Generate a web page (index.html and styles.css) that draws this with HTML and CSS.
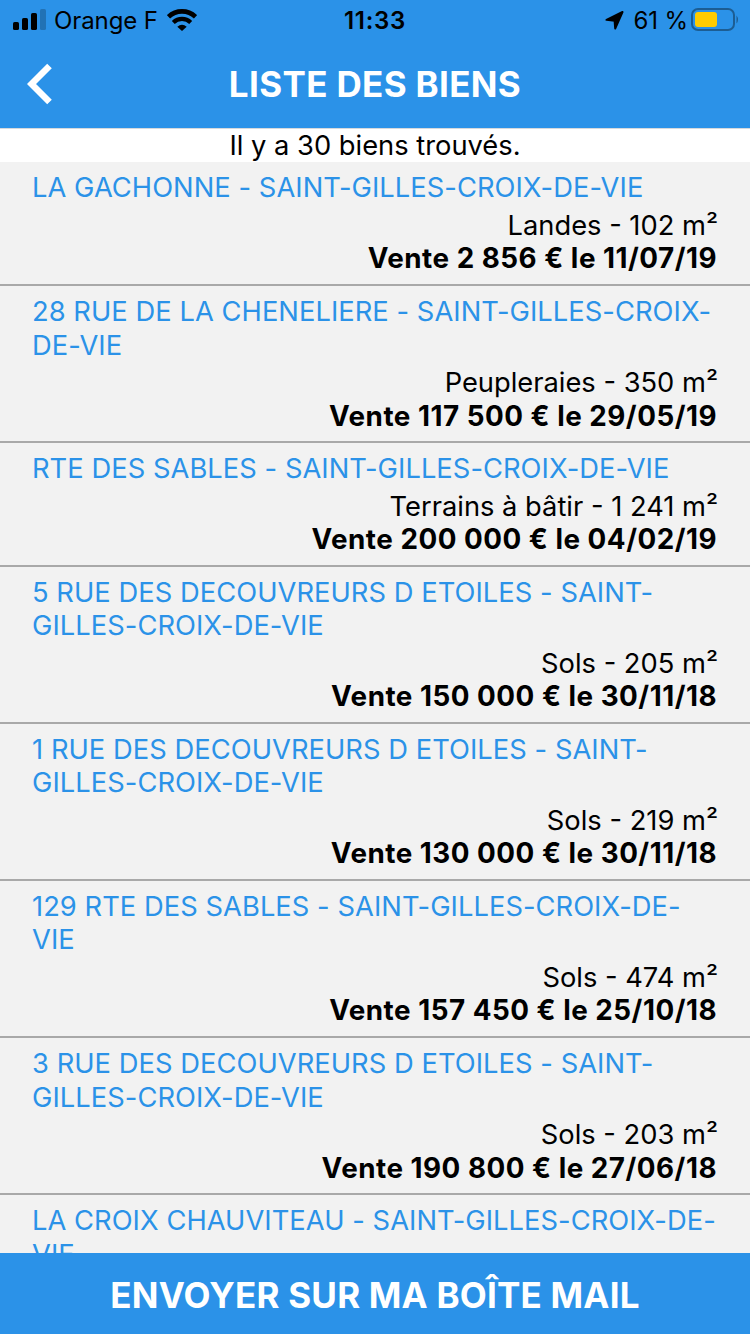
FILE: index.html
```html
<!DOCTYPE html>
<html lang="fr">
<head>
    <meta charset="UTF-8">
    <meta name="viewport" content="width=device-width, initial-scale=1.0">
    <title>Liste des biens</title>
    <link rel="stylesheet" href="styles.css">
</head>
<body>
    <div class="app">
        <div class="status-bar">
            <div class="status-left">
                <svg class="signal" width="34" height="22" viewBox="0 0 34 22">
                    <rect x="0" y="13" width="6" height="8" rx="1.6"/>
                    <rect x="9" y="9" width="6" height="12" rx="1.6"/>
                    <rect x="18" y="4" width="6" height="17" rx="1.6"/>
                    <rect x="27" y="0" width="6" height="21" rx="1.6" opacity="0.22"/>
                </svg>
                <span class="carrier">Orange F</span>
                <svg class="wifi" width="30" height="22" viewBox="0 0 30 22">
                    <path d="M1.5 7.8a19.5 19.5 0 0 1 27 0" fill="none" stroke="#000" stroke-width="4.6"/>
                    <path d="M6.3 13.4a12.5 12.5 0 0 1 17.4 0" fill="none" stroke="#000" stroke-width="4.2"/>
                    <path d="M10.3 17.8q4.7-4.2 9.4 0L15 22z"/>
                </svg>
            </div>
            <div class="status-time">11:33</div>
            <div class="status-right">
                <svg class="location" width="19" height="19" viewBox="0 0 19 19">
                    <path d="M17.5 1L10.2 17.5L9.6 9.8L1.5 8.8z" stroke="#000" stroke-width="2" stroke-linejoin="round"/>
                </svg>
                <span class="percent">61 %</span>
                <svg class="battery" width="48" height="24" viewBox="0 0 48 24">
                    <rect x="1" y="1" width="42" height="21" rx="6" fill="none" stroke="#1c5d93" stroke-width="2"/>
                    <rect x="4" y="4" width="22" height="15" rx="3" fill="#ffcc00"/>
                    <path d="M45.5 7.5q3 4 0 8z" fill="#1c5d93"/>
                </svg>
            </div>
        </div>
        <div class="header">
            <svg class="back" width="26" height="42" viewBox="0 0 26 42">
                <path d="M22.5 3L4.5 21L22.5 39" fill="none" stroke="#fff" stroke-width="6.5"/>
            </svg>
            <h1>LISTE DES BIENS</h1>
        </div>
        <p class="count">Il y a 30 biens trouvés.</p>
        <div class="list">
            <div class="item">
                <div class="address">LA GACHONNE - SAINT-GILLES-CROIX-DE-VIE</div>
                <div class="detail">Landes - 102 m²</div>
                <div class="sale">Vente 2 856 € le 11/07/19</div>
            </div>
            <div class="item">
                <div class="address">28 RUE DE LA CHENELIERE - SAINT-GILLES-CROIX-<br>DE-VIE</div>
                <div class="detail">Peupleraies - 350 m²</div>
                <div class="sale">Vente 117 500 € le 29/05/19</div>
            </div>
            <div class="item">
                <div class="address">RTE DES SABLES - SAINT-GILLES-CROIX-DE-VIE</div>
                <div class="detail">Terrains à bâtir - 1 241 m²</div>
                <div class="sale">Vente 200 000 € le 04/02/19</div>
            </div>
            <div class="item">
                <div class="address">5 RUE DES DECOUVREURS D ETOILES - SAINT-<br>GILLES-CROIX-DE-VIE</div>
                <div class="detail">Sols - 205 m²</div>
                <div class="sale">Vente 150 000 € le 30/11/18</div>
            </div>
            <div class="item">
                <div class="address">1 RUE DES DECOUVREURS D ETOILES - SAINT-<br>GILLES-CROIX-DE-VIE</div>
                <div class="detail">Sols - 219 m²</div>
                <div class="sale">Vente 130 000 € le 30/11/18</div>
            </div>
            <div class="item">
                <div class="address">129 RTE DES SABLES - SAINT-GILLES-CROIX-DE-<br>VIE</div>
                <div class="detail">Sols - 474 m²</div>
                <div class="sale">Vente 157 450 € le 25/10/18</div>
            </div>
            <div class="item">
                <div class="address">3 RUE DES DECOUVREURS D ETOILES - SAINT-<br>GILLES-CROIX-DE-VIE</div>
                <div class="detail">Sols - 203 m²</div>
                <div class="sale">Vente 190 800 € le 27/06/18</div>
            </div>
            <div class="item">
                <div class="address">LA CROIX CHAUVITEAU - SAINT-GILLES-CROIX-DE-<br>VIE</div>
            </div>
        </div>
        <button class="send-button">ENVOYER SUR MA BOÎTE MAIL</button>
    </div>
</body>
</html>
```
FILE: styles.css
```css
* {
    box-sizing: border-box;
}

body {
    margin: 0;
    font-family: Inter, "Liberation Sans", sans-serif;
    font-size: 27.3px;
    line-height: 33.5px;
    color: #000;
    background-color: #fff;
}

.app {
    display: flex;
    flex-direction: column;
    height: 1334px;
    overflow: hidden;
}

.status-bar {
    display: grid;
    grid-template-columns: 1fr auto 1fr;
    align-items: center;
    flex: none;
    height: 40px;
    padding: 0 11px 0 13px;
    background-color: #2b92e8;
    font-size: 24px;
}

.status-left,
.status-right {
    display: flex;
    align-items: center;
}

.status-right {
    justify-content: flex-end;
}

.signal {
    margin-top: -1px;
}

.carrier {
    margin: 2px 9px 0 7px;
    letter-spacing: -0.1px;
}

.status-time {
    margin: 2px 0 0 -2px;
    font-weight: 600;
    letter-spacing: 0.7px;
}

.location {
    margin-top: 1px;
}

.percent {
    margin: 2px 3px 0 9px;
    letter-spacing: -0.1px;
}

.header {
    display: grid;
    grid-template-columns: 60px 1fr 60px;
    align-items: center;
    flex: none;
    height: 88px;
    background-color: #2b92e8;
}

.back {
    margin-left: 27px;
}

.header h1 {
    margin: 0;
    font-size: 35px;
    font-weight: 700;
    line-height: 42px;
    letter-spacing: 0.35px;
    text-align: center;
    color: #fff;
}

.count {
    flex: none;
    height: 34.4px;
    margin: 0;
    border-top: 1px solid #d5d9dd;
    text-align: center;
}

.list {
    flex: 1;
    min-height: 0;
    overflow: hidden;
    background-color: #f2f2f2;
}

.item {
    padding: 9.1px 32px 8px;
    border-bottom: 2px solid #a9a9a9;
}

.address {
    margin-bottom: 4px;
    color: #2b92e8;
    letter-spacing: 0.05px;
    white-space: nowrap;
}

.detail,
.sale {
    text-align: right;
}

.sale {
    padding-right: 1px;
    font-size: 27.8px;
    font-weight: 700;
    letter-spacing: 0.5px;
}

.send-button {
    flex: none;
    height: 81px;
    padding: 3px 0 0;
    border: none;
    background-color: #2b92e8;
    color: #fff;
    font-family: inherit;
    font-size: 35px;
    font-weight: 700;
    letter-spacing: 0.2px;
}
```
